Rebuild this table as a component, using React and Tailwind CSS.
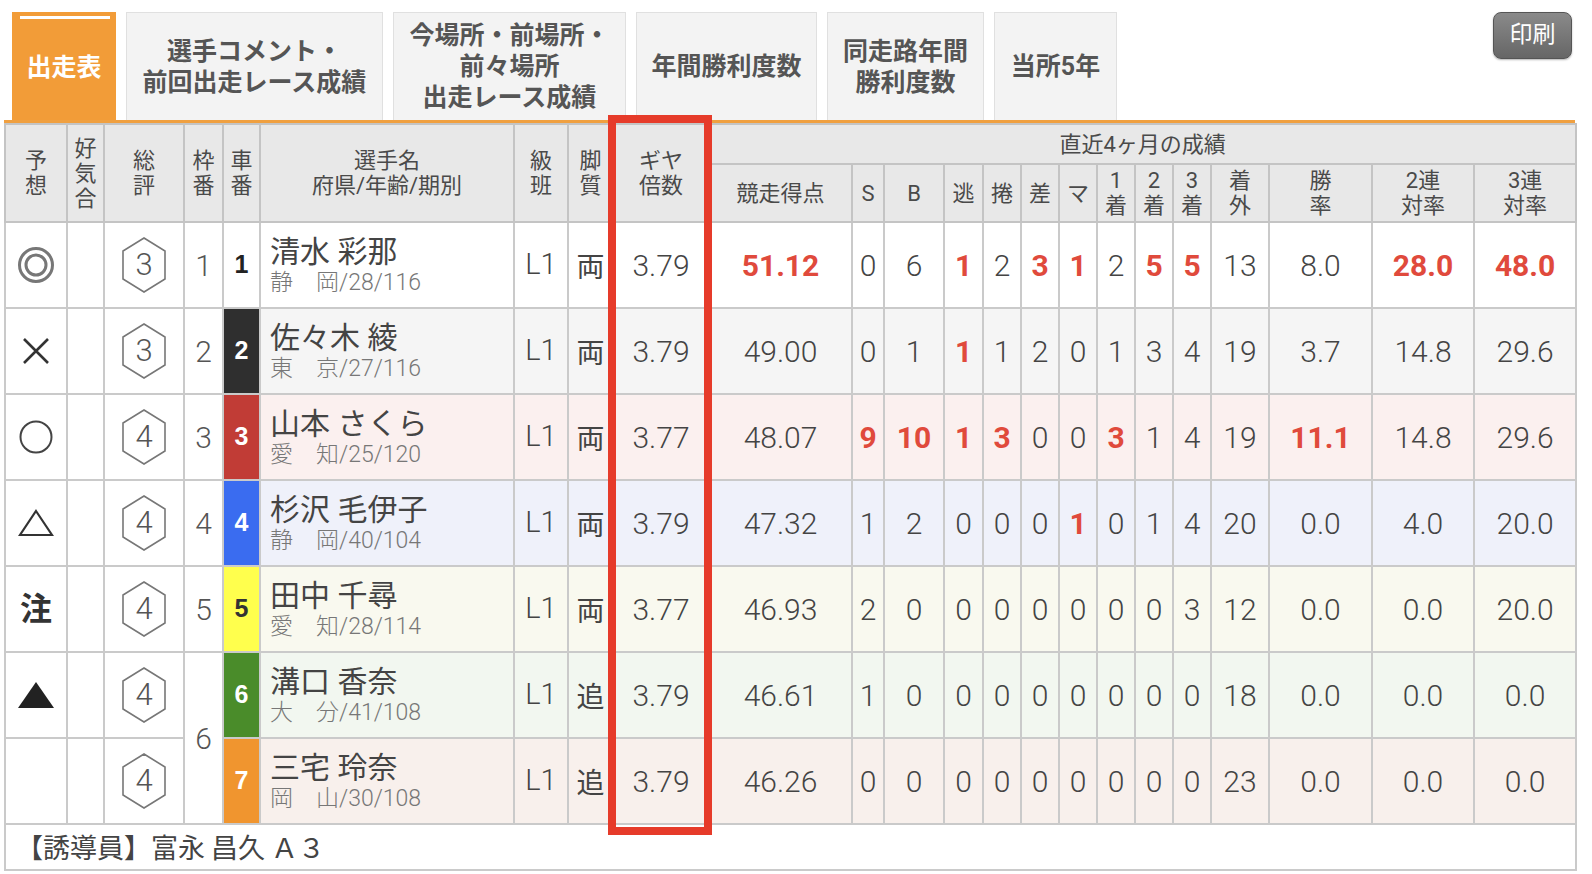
import React from "react";

const tabs = [
  { label: ["選手コメント・", "前回出走レース成績"], w: "w-[257px]" },
  { label: ["今場所・前場所・", "前々場所", "出走レース成績"], w: "w-[233px]" },
  { label: ["年間勝利度数"], w: "w-[181px]" },
  { label: ["同走路年間", "勝利度数"], w: "w-[157px]" },
  { label: ["当所5年"], w: "w-[123px]" },
];

const widths = [62, 37, 80, 39, 37, 254, 54, 45, 96, 143, 32, 60, 39, 38, 38, 38, 38, 38, 38, 58, 103, 102, 102];

const carColors = {
  1: "bg-white text-[#222]",
  2: "bg-[#2f2f2f] text-white",
  3: "bg-[#c13c36] text-white",
  4: "bg-[#3a6cf0] text-white",
  5: "bg-[#ffff4d] text-[#333]",
  6: "bg-[#4a8c2a] text-white",
  7: "bg-[#f0952f] text-white",
};

const r = (v) => [v, true];
const n = (v) => [v, false];

const rows = [
  { mark: "dbl", hex: 3, waku: 1, car: 1, name: "清水 彩那", sub: "静　岡/28/116", kyaku: "両", gear: "3.79", score: r("51.12"), bg: "bg-white",
    st: [n("0"), n("6"), r("1"), n("2"), r("3"), r("1"), n("2"), r("5"), r("5"), n("13"), n("8.0"), r("28.0"), r("48.0")] },
  { mark: "x", hex: 3, waku: 2, car: 2, name: "佐々木 綾", sub: "東　京/27/116", kyaku: "両", gear: "3.79", score: n("49.00"), bg: "bg-[#f5f5f5]",
    st: [n("0"), n("1"), r("1"), n("1"), n("2"), n("0"), n("1"), n("3"), n("4"), n("19"), n("3.7"), n("14.8"), n("29.6")] },
  { mark: "o", hex: 4, waku: 3, car: 3, name: "山本 さくら", sub: "愛　知/25/120", kyaku: "両", gear: "3.77", score: n("48.07"), bg: "bg-[#fbf0ef]",
    st: [r("9"), r("10"), r("1"), r("3"), n("0"), n("0"), r("3"), n("1"), n("4"), n("19"), r("11.1"), n("14.8"), n("29.6")] },
  { mark: "tri", hex: 4, waku: 4, car: 4, name: "杉沢 毛伊子", sub: "静　岡/40/104", kyaku: "両", gear: "3.79", score: n("47.32"), bg: "bg-[#eff1fa]",
    st: [n("1"), n("2"), n("0"), n("0"), n("0"), r("1"), n("0"), n("1"), n("4"), n("20"), n("0.0"), n("4.0"), n("20.0")] },
  { mark: "chu", hex: 4, waku: 5, car: 5, name: "田中 千尋", sub: "愛　知/28/114", kyaku: "両", gear: "3.77", score: n("46.93"), bg: "bg-[#f9f9ef]",
    st: [n("2"), n("0"), n("0"), n("0"), n("0"), n("0"), n("0"), n("0"), n("3"), n("12"), n("0.0"), n("0.0"), n("20.0")] },
  { mark: "ftri", hex: 4, waku: 6, wakuSpan: 2, car: 6, name: "溝口 香奈", sub: "大　分/41/108", kyaku: "追", gear: "3.79", score: n("46.61"), bg: "bg-[#f2f7f0]",
    st: [n("1"), n("0"), n("0"), n("0"), n("0"), n("0"), n("0"), n("0"), n("0"), n("18"), n("0.0"), n("0.0"), n("0.0")] },
  { mark: "", hex: 4, waku: null, car: 7, name: "三宅 玲奈", sub: "岡　山/30/108", kyaku: "追", gear: "3.79", score: n("46.26"), bg: "bg-[#f8f0ec]",
    st: [n("0"), n("0"), n("0"), n("0"), n("0"), n("0"), n("0"), n("0"), n("0"), n("23"), n("0.0"), n("0.0"), n("0.0")] },
];

function Mark({ type }) {
  if (type === "dbl")
    return (
      <svg width="38" height="38" viewBox="0 0 38 38" className="mx-auto">
        <circle cx="19" cy="19" r="16.5" fill="none" stroke="#777" strokeWidth="3" />
        <circle cx="19" cy="19" r="10" fill="none" stroke="#777" strokeWidth="3" />
      </svg>
    );
  if (type === "x")
    return (
      <svg width="30" height="30" viewBox="0 0 30 30" className="mx-auto">
        <path d="M3 3 L27 27 M27 3 L3 27" stroke="#333" strokeWidth="2.6" />
      </svg>
    );
  if (type === "o")
    return (
      <svg width="36" height="36" viewBox="0 0 36 36" className="mx-auto">
        <circle cx="18" cy="18" r="15.5" fill="none" stroke="#444" strokeWidth="2" />
      </svg>
    );
  if (type === "tri")
    return (
      <svg width="36" height="30" viewBox="0 0 36 30" className="mx-auto">
        <path d="M18 3 L34 27 L2 27 Z" fill="none" stroke="#333" strokeWidth="2.2" />
      </svg>
    );
  if (type === "ftri")
    return (
      <svg width="38" height="30" viewBox="0 0 38 30" className="mx-auto">
        <path d="M19 2 L37 28 L1 28 Z" fill="#222" />
      </svg>
    );
  if (type === "chu") return <span className="text-[32px] font-bold text-[#333]">注</span>;
  return null;
}

function Hex({ v }) {
  return (
    <div className="relative w-[48px] h-[58px] mx-auto flex items-center justify-center">
      <svg width="48" height="58" viewBox="0 0 48 58" className="absolute inset-0">
        <path d="M24 2 L45 15 L45 43 L24 56 L3 43 L3 15 Z" fill="none" stroke="#777" strokeWidth="1.6" />
      </svg>
      <span className="relative text-[31px] font-light text-[#555]">{v}</span>
    </div>
  );
}

const td = "border-2 border-[#cacaca] text-center align-middle p-0";
const th = "border-2 border-[#c4c4c4] bg-[#e8e8e8] text-center align-middle p-0 font-normal text-[22px] leading-[25px] text-[#4a4a4a]";

export default function App() {
  return (
    <div className="relative w-[1592px] h-[874px] bg-white overflow-hidden font-['Roboto','Noto_Sans_CJK_JP',sans-serif] text-[#444]">
      <div className="flex items-start pl-[12px] pt-[12px] pr-[20px] h-[120px]">
        <div className="relative w-[104px] h-[108px] bg-[#f29c38] flex items-center justify-center">
          <div className="absolute top-[4px] left-[8px] right-[6px] h-[3px] bg-white" />
          <span className="text-white font-bold text-[25px] mt-[4px]">出走表</span>
        </div>
        {tabs.map((t, i) => (
          <div
            key={i}
            className={`${t.w} ml-[10px] h-[108px] bg-[#f3f3f3] border border-[#e0e0e0] border-b-0 flex flex-col items-center justify-center text-[#555] font-bold text-[25px] leading-[31px]`}
          >
            {t.label.map((l) => (
              <span key={l}>{l}</span>
            ))}
          </div>
        ))}
        <div className="ml-auto w-[79px] h-[47px] rounded-[8px] bg-gradient-to-b from-[#8a8a8a] to-[#666] border border-[#555] flex items-center justify-center text-white text-[23px] shadow-[0_1px_2px_rgba(0,0,0,0.3)]">
          印刷
        </div>
      </div>

      <div className="ml-[4px] w-[1571px] border-t-[3px] border-[#f0a040]">
        <table className="table-fixed border-collapse w-[1571px]">
          <colgroup>
            {widths.map((w, i) => (
              <col key={i} style={{ width: w }} />
            ))}
          </colgroup>
          <thead>
            <tr className="h-[40px]">
              <th rowSpan={2} className={th}>予<br />想</th>
              <th rowSpan={2} className={th}>好<br />気<br />合</th>
              <th rowSpan={2} className={th}>総<br />評</th>
              <th rowSpan={2} className={th}>枠<br />番</th>
              <th rowSpan={2} className={th}>車<br />番</th>
              <th rowSpan={2} className={th}>選手名<br />府県/年齢/期別</th>
              <th rowSpan={2} className={th}>級<br />班</th>
              <th rowSpan={2} className={th}>脚<br />質</th>
              <th rowSpan={2} className={th}>ギヤ<br />倍数</th>
              <th colSpan={14} className={th}>直近4ヶ月の成績</th>
            </tr>
            <tr className="h-[58px]">
              <th className={th}>競走得点</th>
              <th className={th}>S</th>
              <th className={th}>B</th>
              <th className={th}>逃</th>
              <th className={th}>捲</th>
              <th className={th}>差</th>
              <th className={th}>マ</th>
              <th className={th}>1<br />着</th>
              <th className={th}>2<br />着</th>
              <th className={th}>3<br />着</th>
              <th className={th}>着<br />外</th>
              <th className={th}>勝<br />率</th>
              <th className={th}>2連<br />対率</th>
              <th className={th}>3連<br />対率</th>
            </tr>
          </thead>
          <tbody>
            {rows.map((row, i) => (
              <tr key={i} className="h-[86px]">
                <td className={`${td} bg-white`}>
                  <Mark type={row.mark} />
                </td>
                <td className={`${td} bg-white`} />
                <td className={`${td} bg-white`}>
                  <Hex v={row.hex} />
                </td>
                {row.waku !== null && (
                  <td rowSpan={row.wakuSpan || 1} className={`${td} bg-white text-[30px] font-light text-[#555]`}>
                    {row.waku}
                  </td>
                )}
                <td className={`${td} ${carColors[row.car]} text-[25px] font-bold font-['Liberation_Sans',sans-serif]`}>
                  {row.car}
                </td>
                <td className={`${td} ${row.bg} text-left pl-[9px]`}>
                  <div className="text-[30px] leading-[35px] text-[#444] font-['Roboto','Noto_Sans_CJK_JP',sans-serif]">{row.name}</div>
                  <div className="text-[23px] leading-[28px] text-[#777] font-['Roboto','Noto_Sans_CJK_JP',sans-serif] font-light">{row.sub}</div>
                </td>
                <td className={`${td} ${row.bg} text-[29px] font-light`}>L1</td>
                <td className={`${td} ${row.bg} text-[28px] font-['Noto_Sans_CJK_JP',sans-serif]`}>{row.kyaku}</td>
                <td className={`${td} ${row.bg} text-[30px] font-light`}>{row.gear}</td>
                <td className={`${td} ${row.bg} text-[30px] ${row.score[1] ? "text-[#e04a3c] font-bold" : "font-light"}`}>
                  {row.score[0]}
                </td>
                {row.st.map(([v, red], j) => (
                  <td key={j} className={`${td} ${row.bg} text-[30px] ${red ? "text-[#e04a3c] font-bold" : "font-light"}`}>
                    {v}
                  </td>
                ))}
              </tr>
            ))}
            <tr className="h-[46px]">
              <td colSpan={23} className={`${td} bg-white text-left pl-[10px] text-[27px] font-['Noto_Sans_CJK_JP',sans-serif] text-[#444]`}>
                【誘導員】富永 昌久 Ａ３
              </td>
            </tr>
          </tbody>
        </table>
      </div>

      <div className="absolute left-[608px] top-[115px] w-[104px] h-[720px] border-[8px] border-[#e63b2a] pointer-events-none" />
    </div>
  );
}
